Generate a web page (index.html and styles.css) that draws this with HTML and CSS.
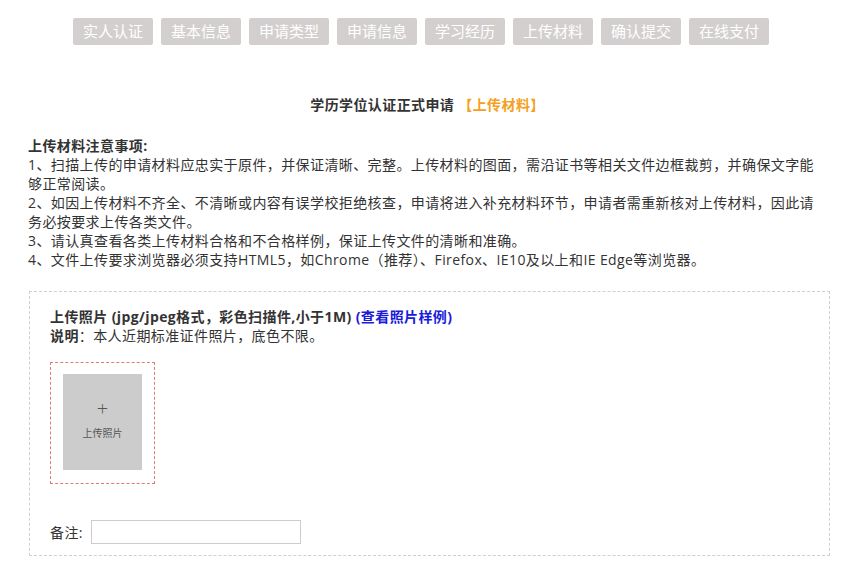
FILE: index.html
```html
<!DOCTYPE html>
<html lang="zh">
<head>
<meta charset="utf-8">
<title>上传材料</title>
<link rel="stylesheet" href="styles.css">
</head>
<body>
<div class="page">
  <nav class="steps">
    <span class="step">实人认证</span>
    <span class="step">基本信息</span>
    <span class="step">申请类型</span>
    <span class="step">申请信息</span>
    <span class="step">学习经历</span>
    <span class="step">上传材料</span>
    <span class="step">确认提交</span>
    <span class="step">在线支付</span>
  </nav>
  <h1 class="title">学历学位认证正式申请 <span class="current">【上传材料】</span></h1>
  <div class="notice">
    <div class="notice-head">上传材料注意事项:</div>
    <p>1、扫描上传的申请材料应忠实于原件，并保证清晰、完整。上传材料的图面，需沿证书等相关文件边框裁剪，并确保文字能够正常阅读。</p>
    <p>2、如因上传材料不齐全、不清晰或内容有误学校拒绝核查，申请将进入补充材料环节，申请者需重新核对上传材料，因此请务必按要求上传各类文件。</p>
    <p>3、请认真查看各类上传材料合格和不合格样例，保证上传文件的清晰和准确。</p>
    <p>4、文件上传要求浏览器必须支持HTML5，如Chrome（推荐）、Firefox、IE10及以上和IE Edge等浏览器。</p>
  </div>
  <section class="upload">
    <div class="upload-title">上传照片 (jpg/jpeg格式，彩色扫描件,小于1M) <a class="sample" href="#">(查看照片样例)</a></div>
    <div class="upload-desc"><b>说明</b>：本人近期标准证件照片，底色不限。</div>
    <div class="drop">
      <div class="drop-inner">
        <span class="plus">+</span>
        <span class="drop-label">上传照片</span>
      </div>
    </div>
    <div class="remark">
      <label class="remark-label">备注:</label>
      <input class="remark-input" type="text">
    </div>
  </section>
</div>
</body>
</html>
```

FILE: styles.css
```css
* { box-sizing: border-box; }
html, body { margin: 0; padding: 0; background: #fff; }
body {
  font-family: "Open Sans", "Noto Sans CJK SC", "Noto Sans", sans-serif;
  font-size: 14px;
  letter-spacing: 0.4px;
  color: #333;
}
.page { width: 863px; }
.steps {
  display: flex;
  gap: 8px;
  padding: 18px 0 0 73px;
}
.step {
  width: 80px;
  height: 27px;
  background: #d3cfcf;
  color: #fff;
  border-radius: 2px;
  font-size: 15px;
  letter-spacing: 0;
  line-height: 27px;
  text-align: center;
}
.title {
  margin: 49px 0 0;
  padding-right: 8px;
  text-align: center;
  font-size: 14px;
  font-weight: bold;
  line-height: 22px;
  color: #333;
}
.current { color: #f5a020; }
.notice {
  margin: 20px 0 0 28px;
  width: 793px;
  line-height: 19px;
  color: #333;
}
.notice-head { font-weight: bold; }
.notice p { margin: 0; }
.upload {
  margin: 22px 0 0 29px;
  width: 801px;
  border: 1px dashed #cfcfcf;
  padding: 15px 20px 11px;
}
.upload-title {
  font-weight: bold;
  line-height: 19px;
}
.sample { color: #1a1adb; text-decoration: none; }
.upload-desc { line-height: 19px; }
.drop {
  margin-top: 17px;
  width: 105px;
  height: 122px;
  border: 1px dashed #e07a7a;
  padding: 11px 12px 13px;
}
.drop-inner {
  width: 79px;
  height: 96px;
  background: #cccccc;
  display: flex;
  flex-direction: column;
  align-items: center;
  padding-top: 24px;
  color: #555;
  letter-spacing: 0;
}
.plus {
  font-size: 20px;
  line-height: 22px;
  font-weight: 300;
}
.drop-label {
  margin-top: 6px;
  font-size: 10px;
  line-height: 14px;
}
.remark {
  margin-top: 36px;
  display: flex;
  align-items: center;
}
.remark-label { font-size: 14px; line-height: 23px; }
.remark-input {
  margin: 0 0 0 8px;
  width: 210px;
  height: 24px;
  border: 1px solid #ccc;
  padding: 0 4px;
  font: inherit;
}
```
